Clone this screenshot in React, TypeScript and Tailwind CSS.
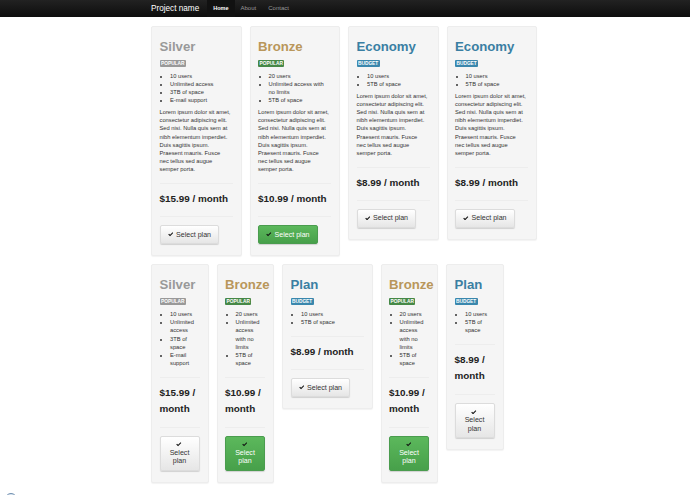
import React from "react";

const FONT = "font-['Liberation_Sans',Arial,sans-serif]";

function Check() {
  return (
    <svg viewBox="0 0 12 10" className="inline-block w-[5.5px] h-[4.6px] align-baseline mr-[1px]">
      <path d="M0.5 5.5 L2.3 3.8 L4.5 6 L10 0.5 L11.5 2.2 L4.5 9.5 Z" fill="#111" />
    </svg>
  );
}

type Tone = "silver" | "bronze" | "blue";

const titleColor: Record<Tone, string> = {
  silver: "text-[#999999]",
  bronze: "text-[#b9975b]",
  blue: "text-[#3a7fa3]",
};
const badgeColor: Record<Tone, string> = {
  silver: "bg-[#999999]",
  bronze: "bg-[#468847]",
  blue: "bg-[#3a87ad]",
};

function Plan({
  width,
  tone,
  title,
  badge,
  items,
  price,
  lorem,
  primary,
}: {
  width: string;
  tone: Tone;
  title: string;
  badge: string;
  items: string[];
  price: string;
  lorem?: boolean;
  primary?: boolean;
}) {
  return (
    <div className={`${width} shrink-0 rounded-[2px] border border-[#ededed] bg-[#f5f5f5] pl-[7.5px] pr-[8px] pt-[12px] pb-[11px] shadow-[0_1px_1px_rgba(0,0,0,0.05)]`}>
      <h2 className={`text-[13.2px] leading-[16px] font-bold ${titleColor[tone]} whitespace-nowrap`}>{title}</h2>
      <div className="mt-[5px] flex">
        <span className={`${badgeColor[tone]} rounded-[1px] px-[1.5px] h-[7px] text-[4.8px] leading-[7px] font-bold text-white uppercase`}>
          {badge}
        </span>
      </div>
      <ul className="mt-[4.5px] list-disc pl-[10.5px] text-[5.75px] leading-[8.2px] text-[#333]">
        {items.map((t) => (
          <li key={t}>{t}</li>
        ))}
      </ul>
      {lorem && (
        <p className="mt-[3.6px] text-[5.75px] leading-[8.2px] text-[#333]">
          Lorem ipsum dolor sit amet, consectetur adipiscing elit. Sed nisi. Nulla quis sem at nibh elementum imperdiet. Duis sagittis ipsum.
          <br />
          Praesent mauris. Fusce
          <br />
          nec tellus sed augue semper porta.
        </p>
      )}
      <hr className="mt-[9.5px] border-t border-[#ededed]" />
      <div className="mt-[7px] text-[9.9px] leading-[16.4px] font-bold text-[#222]">{price}</div>
      <hr className="mt-[9px] border-t border-[#ededed]" />
      <div className="mt-[8px] flex">
        <button
          className={
            primary
              ? "rounded-[2px] border border-[#4a9c4e] bg-gradient-to-b from-[#5cb85c] to-[#47a04a] px-[7px] py-[4.4px] text-[7.1px] leading-[8.2px] text-white shadow-[0_1px_1px_rgba(0,0,0,0.15)]"
              : "rounded-[2px] border border-[#dcdcdc] bg-gradient-to-b from-white to-[#e6e6e6] px-[7px] py-[4.4px] text-[7.1px] leading-[8.2px] text-[#333] shadow-[0_1px_1px_rgba(0,0,0,0.15)]"
          }
        >
          <Check /> Select plan
        </button>
      </div>
    </div>
  );
}

export default function App() {
  return (
    <div className={`${FONT} relative h-[495px] w-[690px] overflow-hidden bg-white`}>
      <nav className="flex h-[17px] items-stretch bg-gradient-to-b from-[#222222] to-[#0d0d0d] pl-[151px]">
        <span className="mr-[8px] self-center text-[8.2px] leading-[10px] text-white">Project name</span>
        <a className="flex items-center bg-[#111111] px-[6px] text-[5.5px] font-bold text-white">Home</a>
        <a className="flex items-center px-[6px] text-[6px] text-[#999999]">About</a>
        <a className="flex items-center px-[6px] text-[6px] text-[#999999]">Contact</a>
      </nav>

      <div className="mt-[9px] flex items-start gap-[8px] pl-[151px]">
        <Plan width="w-[90.5px]" tone="silver" title="Silver" badge="Popular" items={["10 users", "Unlimited access", "3TB of space", "E-mail support"]} price="$15.99 / month" lorem />
        <Plan width="w-[90.5px]" tone="bronze" title="Bronze" badge="Popular" items={["20 users", "Unlimited access with no limits", "5TB of space"]} price="$10.99 / month" lorem primary />
        <Plan width="w-[90.5px]" tone="blue" title="Economy" badge="Budget" items={["10 users", "5TB of space"]} price="$8.99 / month" lorem />
        <Plan width="w-[90.5px]" tone="blue" title="Economy" badge="Budget" items={["10 users", "5TB of space"]} price="$8.99 / month" lorem />
      </div>

      <div className="mt-[8px] flex items-start gap-[8px] pl-[151px]">
        <Plan width="w-[57.5px]" tone="silver" title="Silver" badge="Popular" items={["10 users", "Unlimited access", "3TB of space", "E-mail support"]} price="$15.99 / month" />
        <Plan width="w-[57.5px]" tone="bronze" title="Bronze" badge="Popular" items={["20 users", "Unlimited access with no limits", "5TB of space"]} price="$10.99 / month" primary />
        <Plan width="w-[90.5px]" tone="blue" title="Plan" badge="Budget" items={["10 users", "5TB of space"]} price="$8.99 / month" />
        <Plan width="w-[57.5px]" tone="bronze" title="Bronze" badge="Popular" items={["20 users", "Unlimited access with no limits", "5TB of space"]} price="$10.99 / month" primary />
        <Plan width="w-[57.5px]" tone="blue" title="Plan" badge="Budget" items={["10 users", "5TB of space"]} price="$8.99 / month" />
      </div>

      <div className="absolute left-[5px] top-[493px] h-[12px] w-[12px] rounded-full border border-[#6f8fb0] bg-[#dfe8f2]" />
    </div>
  );
}
